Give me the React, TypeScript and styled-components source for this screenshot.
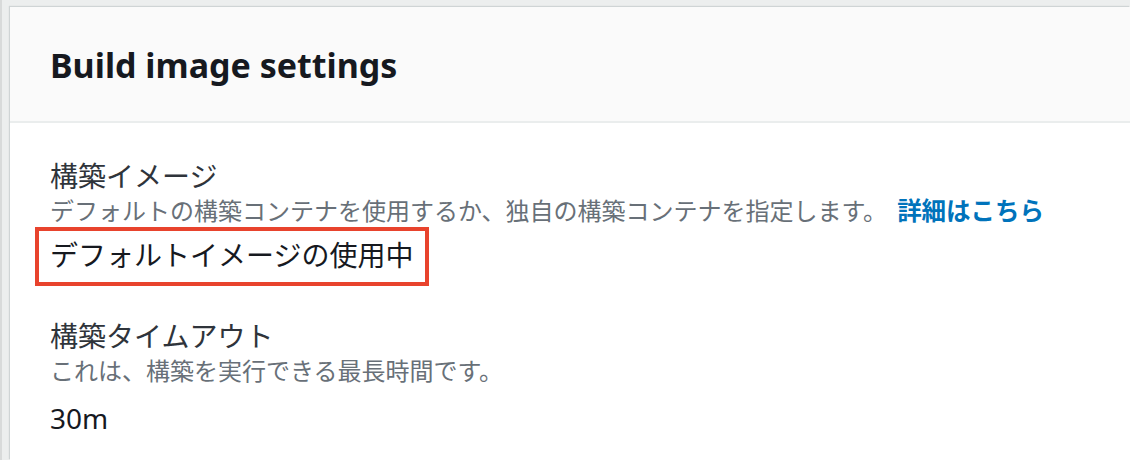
import React from 'react';
import styled, { createGlobalStyle } from 'styled-components';

const GlobalStyle = createGlobalStyle`
  html, body {
    margin: 0;
    padding: 0;
    background: #eceeee;
    width: 1130px;
    height: 460px;
    overflow: hidden;
  }
`;

const Page = styled.div`
  height: 460px;
  padding: 7px 0 0 8px;
  box-sizing: border-box;
  border-left: 2px solid #d8dada;
  font-family: 'Noto Sans', 'Noto Sans CJK JP', sans-serif;
`;

const Panel = styled.section`
  height: 100%;
  background: #ffffff;
  box-shadow: -1px -1px 1px rgba(0, 28, 36, 0.12);
`;

const Header = styled.header`
  height: 116px;
  box-sizing: border-box;
  display: flex;
  align-items: center;
  padding: 2px 40px 0;
  background: #fafafa;
  border-bottom: 2px solid #eaeded;
`;

const Title = styled.h2`
  margin: 0;
  font-size: 34px;
  font-weight: 700;
  color: #16191f;
`;

const Body = styled.div`
  padding: 35px 40px 0;
  display: flex;
  flex-direction: column;
  align-items: flex-start;
`;

const Field = styled.div<{ $gap?: number }>`
  display: flex;
  flex-direction: column;
  align-items: flex-start;
  margin-top: ${(p) => p.$gap ?? 0}px;
`;

const Label = styled.div`
  font-size: 28px;
  line-height: 36px;
  color: #2f343b;
`;

const Description = styled.div`
  font-size: 24px;
  line-height: 33px;
  color: #687078;
`;

const Link = styled.a`
  color: #0073bb;
  font-size: 24.5px;
  font-weight: 700;
  text-decoration: none;
  margin-left: 10px;
`;

const Value = styled.div<{ $highlight?: boolean; $gap?: number }>`
  font-size: 28px;
  line-height: ${(p) => (p.$highlight ? '48px' : '36px')};
  color: #16191f;
  margin-top: ${(p) => p.$gap ?? 0}px;
  ${(p) =>
    p.$highlight
      ? `
    margin-left: -15px;
    padding: 0 12px 3px 11px;
    border: 4px solid #e8432d;
  `
      : ''}
`;

export default function App() {
  return (
    <>
      <GlobalStyle />
      <Page>
        <Panel>
          <Header>
            <Title>Build image settings</Title>
          </Header>
          <Body>
            <Field>
              <Label>構築イメージ</Label>
              <Description>
                デフォルトの構築コンテナを使用するか、独自の構築コンテナを指定します。
                <Link href="#">詳細はこちら</Link>
              </Description>
              <Value $highlight>デフォルトイメージの使用中</Value>
            </Field>
            <Field $gap={32}>
              <Label>構築タイムアウト</Label>
              <Description>これは、構築を実行できる最長時間です。</Description>
              <Value $gap={13}>30m</Value>
            </Field>
          </Body>
        </Panel>
      </Page>
    </>
  );
}
